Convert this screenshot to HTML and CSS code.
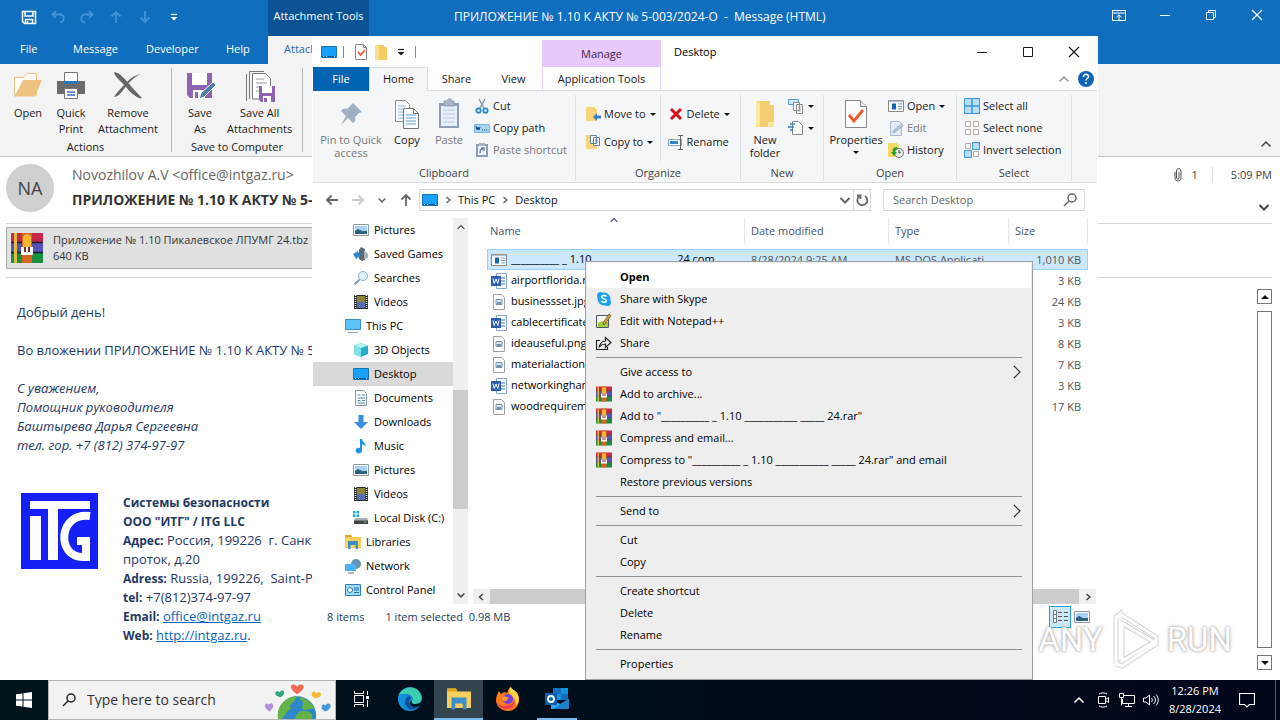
FILE: index.html
```html
<!DOCTYPE html>
<html lang="en">
<head>
    <meta charset="UTF-8">
    <meta name="viewport" content="width=device-width, initial-scale=1.0">
    <title>Desktop</title>
    <link rel="stylesheet" href="styles.css">
</head>
<body>

    <!-- Icon sprite -->
    <svg class="sprite" aria-hidden="true">
        <symbol id="save" viewBox="0 0 16 16"><path d="M1.5 2.5h13v12h-11l-2-2zM4 2.500v4.500h8v-4.500M4.500 14.500v-4h7v4M6.500 12v2" fill="none" stroke="currentColor" stroke-width="1.500"/></symbol>
        <symbol id="undo" viewBox="0 0 16 16"><path d="M6 2L2.500 5.500 6 9M2.500 5.500H10c5 0 5 7 0 8" fill="none" stroke="currentColor" stroke-width="1.800"/></symbol>
        <symbol id="redo" viewBox="0 0 16 16"><path d="M10 2l3.500 3.500L10 9M13.500 5.500H6c-5 0-5 7 0 8" fill="none" stroke="currentColor" stroke-width="1.800"/></symbol>
        <symbol id="up" viewBox="0 0 16 16"><path d="M8 14V3M3.500 7.500L8 3l4.500 4.500" fill="none" stroke="currentColor" stroke-width="1.800"/></symbol>
        <symbol id="down" viewBox="0 0 16 16"><path d="M8 2v11M3.500 8.500L8 13l4.500-4.500" fill="none" stroke="currentColor" stroke-width="1.800"/></symbol>
        <symbol id="left" viewBox="0 0 16 16"><path d="M14 8H3M7.500 3.500L3 8l4.500 4.500" fill="none" stroke="currentColor" stroke-width="1.800"/></symbol>
        <symbol id="right" viewBox="0 0 16 16"><path d="M2 8h11M8.500 3.500L13 8l-4.500 4.500" fill="none" stroke="currentColor" stroke-width="1.800"/></symbol>
        <symbol id="more" viewBox="0 0 16 16"><path d="M5 5.500h6" stroke="currentColor" stroke-width="1.200"/><path d="M4.500 8h7L8 11.500z" fill="currentColor"/></symbol>
        <symbol id="chev-up" viewBox="0 0 16 16"><path d="M3.500 10.500L8 6l4.500 4.500" fill="none" stroke="currentColor" stroke-width="1.500"/></symbol>
        <symbol id="chev-down" viewBox="0 0 16 16"><path d="M3.500 6L8 10.500 12.500 6" fill="none" stroke="currentColor" stroke-width="2"/></symbol>
        <symbol id="chev-left" viewBox="0 0 16 16"><path d="M10.500 4L6 8l4.500 4" fill="none" stroke="currentColor" stroke-width="2"/></symbol>
        <symbol id="chev-right" viewBox="0 0 16 16"><path d="M6 4l4.500 4L6 12" fill="none" stroke="currentColor" stroke-width="2"/></symbol>
        <symbol id="chev-thin" viewBox="0 0 16 16"><path d="M5 2l6 6-6 6" fill="none" stroke="#333" stroke-width="1.200"/></symbol>
        <symbol id="minimize" viewBox="0 0 16 16"><path d="M3 8.500h10" stroke="currentColor"/></symbol>
        <symbol id="maximize" viewBox="0 0 16 16"><path d="M3.500 3.500h9v9h-9z" fill="none" stroke="currentColor"/></symbol>
        <symbol id="restore" viewBox="0 0 16 16"><path d="M3.500 5.500h7v7h-7zM5.500 5V3.500h7v7H11" fill="none" stroke="currentColor"/></symbol>
        <symbol id="close" viewBox="0 0 16 16"><path d="M3 3l10 10M13 3L3 13" stroke="currentColor" stroke-width="1.200"/></symbol>
        <symbol id="ribbon-opts" viewBox="0 0 16 16"><path d="M1.500 3.500h13v10h-13zM1.500 6h13M8 13V8M5.500 10.200L8 7.800l2.500 2.400" fill="none" stroke="currentColor"/></symbol>
        <symbol id="clip" viewBox="0 0 16 16"><path d="M5 5v6c0 4 6 4 6 0V4c0-3.500-4.500-3.500-4.500 0v7c0 1.500 2.500 1.500 2.500 0V5" fill="none" stroke="#555"/></symbol>

        <symbol id="folder-open" viewBox="0 0 32 32"><path d="M2.500 25V7.500h9l3-4h10V25z" fill="#fff" stroke="#edc27e"/><path d="M2.500 26.500L11 10h19l-7 16.500z" fill="#edc180"/></symbol>
        <symbol id="printer" viewBox="0 0 32 32"><path d="M2 11h28v13H2z" fill="#6b6b6b"/><path d="M9.500 2.500h13v9h-13z" fill="#fff" stroke="#777"/><path d="M9 11h14v3H9z" fill="#2f74bd"/><path d="M9.500 18.500h13v10h-13z" fill="#fff" stroke="#777"/><path d="M12 22h8M12 25h8" stroke="#2f74bd" stroke-width="1.500"/></symbol>
        <symbol id="remove" viewBox="0 0 32 32"><path d="M3 3c4 0 10 7 14 12 4 5 9 10 12 13-8-3-11-7-14-11C11 12 4 7 3 3z" fill="#666" stroke="#666" stroke-width="1.500"/><path d="M29 4C20 8 16 14 12 19c-3 4-6 8-10 8 3-5 8-10 12-14 4-5 9-8 15-9z" fill="#666"/></symbol>
        <symbol id="save-as" viewBox="0 0 32 32"><path d="M3 3h25v25H6l-3-3z" fill="#8f63b4"/><path d="M8 3h15v12H8zM9 20h12v8H9z" fill="#fff"/><path d="M11 22h3v6h-3z" fill="#8f63b4"/><path d="M15 29l2-6L29 12l3 3-12 12z" fill="#4a7fb5" stroke="#fff"/></symbol>
        <symbol id="save-all" viewBox="0 0 32 32"><path d="M5.500 29V1.500H20M2.500 31V4" fill="none" stroke="#777"/><path d="M8.500 3.500h13l5 5V29h-18z" fill="#fff" stroke="#777"/><path d="M12 9h8M12 13h11M12 17h8M12 21h4" stroke="#999"/><path d="M15 16h16v16H17l-2-2z" fill="#8f63b4"/><path d="M18 16h10v7H18zM19 26h8v6h-8z" fill="#fff"/><path d="M20 28h3v4h-3z" fill="#8f63b4"/></symbol>

        <symbol id="monitor" viewBox="0 0 16 16"><path d="M.5 2.500h15v11H.5z" fill="#18a0fb" stroke="#1773b8"/><path d="M1 12.500h14" stroke="#0b5c9b"/><path d="M2 12.500h1M5 12.500h1M13 12.500h1" stroke="#9cd6fb"/></symbol>
        <symbol id="check-doc" viewBox="0 0 16 16"><path d="M2.500.5h8l3 3v12h-11z" fill="#fff" stroke="#888"/><path d="M10.500.5v3h3" fill="none" stroke="#888"/><path d="M5 8l2.500 3L12 6" fill="none" stroke="#ea5a2a" stroke-width="1.800"/></symbol>
        <symbol id="folder" viewBox="0 0 16 16"><path d="M2 1h9v2h3v13H2z" fill="#f3cd62"/><path d="M2 1h3l1 3v12H2z" fill="#fbe08c"/></symbol>
        <symbol id="pin" viewBox="0 0 32 32"><path d="M18 5l9 9-3 1-4 4c1 3 0 5-2 6l-5-5-7 7 5-9-5-5c1-2 4-3 6-2l4-4z" fill="#9fb0c4"/></symbol>
        <symbol id="copy" viewBox="0 0 32 32"><path d="M4.500 2.500h10l4 4v17h-14z" fill="#fff" stroke="#8a929b"/><path d="M7 8h8M7 11h9M7 14h9M7 17h9M7 20h6" stroke="#7db2e2"/><path d="M12.500 10.500h10l5 5v15h-15z" fill="#fff" stroke="#777"/><path d="M22.500 10.500v5h5" fill="none" stroke="#777"/><path d="M15 17h10M15 20h10M15 23h10M15 26h10" stroke="#5a9fdc"/></symbol>
        <symbol id="paste" viewBox="0 0 32 32"><path d="M6 5h20v25H6z" fill="#8d9db5"/><path d="M8 8h16v20H8z" fill="#e9eff8"/><path d="M11 3h3c1-3 4-3 5 0h2v5H11z" fill="#aab6c8" stroke="#8d9db5"/><path d="M10 12h12M10 16h12M10 20h12M10 24h12" stroke="#b7c7df"/></symbol>
        <symbol id="cut" viewBox="0 0 16 16"><path d="M5 1l5 9M11 1L6 10" stroke="#8c98a4" stroke-width="1.500"/><circle cx="4.500" cy="12.500" r="2.200" fill="none" stroke="#2589d0" stroke-width="1.800"/><circle cx="11.500" cy="12.500" r="2.200" fill="none" stroke="#2589d0" stroke-width="1.800"/></symbol>
        <symbol id="path" viewBox="0 0 16 16"><path d="M.5 4.500h15v8H.5z" fill="#a9d5f5" stroke="#79b5e4"/><path d="M2 6l1 4 1-3 1 3 1-3M8 10h1M10 10h1M12 10h1" fill="none" stroke="#174a77"/></symbol>
        <symbol id="shortcut" viewBox="0 0 16 16"><path d="M2 2h12v13H2z" fill="#8d9db5"/><path d="M4 4h8v9H4z" fill="#eef2f9"/><path d="M5 1h6v3H5z" fill="#aab6c8"/><path d="M6 11c0-3 1-4 3-4M7 6h3v3" fill="none" stroke="#71819b" stroke-width="1.500"/></symbol>
        <symbol id="move" viewBox="0 0 16 16"><path d="M1 1h9v2h2v12H1z" fill="#f6d678"/><path d="M8 11l4-4v2.500h4v3h-4V15z" fill="#3c7fc8"/></symbol>
        <symbol id="copy-to" viewBox="0 0 16 16"><path d="M1 1h9v2h2v12H1z" fill="#f6d678"/><path d="M5.500 1.500h6v8h-6zM8.500 3.500h6v8h-6z" fill="#fff" stroke="#6082a9"/><path d="M10 6h3M10 8h3" stroke="#5a9fdc"/></symbol>
        <symbol id="delete" viewBox="0 0 16 16"><path d="M3 3l10 10M13 3L3 13" stroke="#d8101c" stroke-width="3"/></symbol>
        <symbol id="rename" viewBox="0 0 16 16"><path d="M.5 5.500h13v6H.5z" fill="#fff" stroke="#88a8c8"/><path d="M2 7h8v3H2z" fill="#3083cf"/><path d="M10 1.500h5M10 15.500h5M12.500 1.500v14" stroke="#666"/></symbol>
        <symbol id="big-folder" viewBox="0 0 32 32"><path d="M7 3h14v4h4v22H7z" fill="#f4cf72"/><path d="M7 3l4 2v25l-4-3z" fill="#fde7a5"/><path d="M19 24h6v5h-6z" fill="#fbe5a0"/></symbol>
        <symbol id="new-item" viewBox="0 0 16 16"><path d="M.5 1.500h10v5H.5z" fill="#cfe8f8" stroke="#5e9bc7"/><path d="M5.500 4.500h6v8h-6zM8.500 6.500h6v9h-6z" fill="#fff" stroke="#888"/><path d="M10 9h3M10 11h3M10 13h3" stroke="#aaa"/></symbol>
        <symbol id="easy" viewBox="0 0 16 16"><path d="M4.500 1.500h6l4 4v9h-10z" fill="#fff" stroke="#888"/><path d="M2 4h5M0 7h6M2 10h3" stroke="#2f7fc7" stroke-width="1.500"/></symbol>
        <symbol id="props" viewBox="0 0 32 32"><path d="M5.500 2.500h15l6 6v21h-21z" fill="#fff" stroke="#888"/><path d="M20.500 2.500v6h6" fill="#e5e9ee" stroke="#888"/><path d="M9 17l5 6 9-11" fill="none" stroke="#ea5a2a" stroke-width="3"/></symbol>
        <symbol id="app" viewBox="0 0 16 16"><path d="M.5 2.500h15v11H.5z" fill="#fff" stroke="#8a8a8a"/><path d="M1 3.500h14" stroke="#b9c3cd" stroke-width="1.500"/><path d="M4 5.500h4v6H4z" fill="#1565b5"/><path d="M10 6h4M10 8.500h4M10 11h4" stroke="#6ea3d0"/></symbol>
        <symbol id="edit" viewBox="0 0 16 16"><path d="M2.500 1.500h9l2 2v12h-11z" fill="#e2ebf6" stroke="#a9b9cf"/><path d="M5 13l1-3 8-6 1 2-8 6z" fill="#b9c9dd" stroke="#9baec8"/></symbol>
        <symbol id="history" viewBox="0 0 16 16"><path d="M0 1h9v2h2v12H0z" fill="#f6d95e"/><circle cx="11" cy="11" r="4.500" fill="#e8e8e8" stroke="#777"/><path d="M11 8v3l2-1" fill="none" stroke="#555"/><path d="M9 5C5 5 4 8 5 10H3l3 4 3-4H7c0-2 1-3 3-3z" fill="#28a12f"/></symbol>
        <symbol id="sel-all" viewBox="0 0 16 16"><path d="M.5.5h15v15H.5z" fill="#b8e0fb" stroke="#3e95d6"/><path d="M8 0v16M0 8h16" stroke="#3e95d6" stroke-width="1.500"/></symbol>
        <symbol id="sel-none" viewBox="0 0 16 16"><path d="M1.500 1.500h5v5h-5zM9.500 1.500h5v5h-5zM1.500 9.500h5v5h-5zM9.500 9.500h5v5h-5z" fill="#fff" stroke="#b9a8a0"/></symbol>
        <symbol id="sel-inv" viewBox="0 0 16 16"><path d="M1.500 1.500h5v5h-5zM9.500 9.500h5v5h-5z" fill="#fff" stroke="#b9a8a0"/><path d="M8.500.5h7v7h-7zM.5 8.500h7v7h-7z" fill="#b8e0fb" stroke="#3e95d6"/></symbol>
        <symbol id="help" viewBox="0 0 16 16"><circle cx="8" cy="8" r="8" fill="#0c63b8"/><path d="M5.500 6c0-3.500 5-3.500 5-.500C10.500 7.500 8 7.500 8 9.500" fill="none" stroke="#fff" stroke-width="1.600"/><circle cx="8" cy="12" r="1" fill="#fff"/></symbol>
        <symbol id="refresh" viewBox="0 0 16 16"><path d="M5 4.500A5 5 0 1 0 11 4M3 3.500h3.500V7" fill="none" stroke="currentColor" stroke-width="1.800"/></symbol>
        <symbol id="search" viewBox="0 0 16 16"><circle cx="10" cy="6" r="4" fill="none" stroke="currentColor" stroke-width="1.500"/><path d="M7 9l-5 5" stroke="currentColor" stroke-width="1.500"/></symbol>

        <symbol id="pictures" viewBox="0 0 16 16"><path d="M.5 2.500h15v11H.5z" fill="#fff" stroke="#8e98a4"/><path d="M2 4h12v8H2z" fill="#a8d3f5"/><path d="M2 9l3-2 4 2h5v3H2z" fill="#2d6180"/></symbol>
        <symbol id="games" viewBox="0 0 16 16"><path d="M8 1l4 2v11l-3 1-3-2V4z" fill="#596b78"/><path d="M11 4l4 4v4l-4 1z" fill="#a5b0b8"/><path d="M0 8l5-3 2 5-4 3z" fill="#2e8bd0"/></symbol>
        <symbol id="searches" viewBox="0 0 16 16"><circle cx="10" cy="6" r="4.500" fill="#dff0fc" stroke="#8fb2cf"/><path d="M6.500 9.500L1.500 14.500" stroke="#7d96ad" stroke-width="1.800"/></symbol>
        <symbol id="videos" viewBox="0 0 16 16"><path d="M1 1h14v14H1z" fill="#2b2b33"/><path d="M4 2h8v6H4z" fill="#8d8438"/><path d="M4 8h8v6H4z" fill="#5570b0"/><path d="M2.500 1v14M13.500 1v14" stroke="#fff" stroke-width="1.500" stroke-dasharray="1 1"/></symbol>
        <symbol id="pc" viewBox="0 0 16 16"><path d="M.5 1.500h15v10H.5z" fill="#5cc3fa" stroke="#3a8cc4"/><path d="M3 14.500h10" stroke="#8ba3b5"/></symbol>
        <symbol id="cube" viewBox="0 0 16 16"><path d="M8 1l7 2.500V12l-7 3-7-3V3.500z" fill="#20b0c9"/><path d="M1 3.500L8 6v9l-7-3z" fill="#7fe0ea"/><path d="M1 3.500L8 1l7 2.500L8 6z" fill="#b6f1f5"/></symbol>
        <symbol id="documents" viewBox="0 0 16 16"><path d="M2.500.5h8l3 3v12h-11z" fill="#fff" stroke="#8a97a5"/><path d="M4.500 5h3M9 5h3M4.500 8H12M4.500 10.500h3M9 10.500h3M4.500 13H12" stroke="#3e8cc7"/></symbol>
        <symbol id="downloads" viewBox="0 0 16 16"><path d="M5.500 1h5v7H15l-7 7-7-7h4.500z" fill="#3b8ede"/></symbol>
        <symbol id="music" viewBox="0 0 16 16"><path d="M7 1h2c0 3 4 3 3.500 8-1-2-2-2.500-3.500-3v6.500A3.200 2.800 0 1 1 7 10z" fill="#1b95ea"/></symbol>
        <symbol id="disk" viewBox="0 0 16 16"><path d="M0 1h2.500v2.500H0zM3.500 1H6v2.500H3.500zM0 4.500h2.500V7H0zM3.500 4.500H6V7H3.500z" fill="#18a7e8"/><path d="M2 8h12l1 2v4H1v-4z" fill="#aab0b5"/><path d="M1 10.500h14V14H1z" fill="#444"/><path d="M11 12h2" stroke="#57e36a"/></symbol>
        <symbol id="libraries" viewBox="0 0 16 16"><path d="M0 1h6l1 2h9v11H0z" fill="#f7cf5e"/><path d="M0 1h6l1 2H0z" fill="#e59f21"/><path d="M3 7h10v8h-2.500v-4h-5v4H3z" fill="#3f8fc9"/></symbol>
        <symbol id="network" viewBox="0 0 16 16"><circle cx="11" cy="6" r="5" fill="#6793b4"/><path d="M0 6h11v7H0z" fill="#4ab4f2"/><path d="M3 15h6" stroke="#59758a"/></symbol>
        <symbol id="control" viewBox="0 0 16 16"><path d="M.5 2.500h15v11H.5z" fill="#9fdcfb" stroke="#2c7fb8"/><circle cx="5" cy="8" r="2.500" fill="#fff" stroke="#2b79ad"/><path d="M9 6h5M9 8h5M9 10.500h5" stroke="#2468a0"/></symbol>
        <symbol id="word" viewBox="0 0 16 16"><path d="M5.500.5h10v15h-10z" fill="#fff" stroke="#85a5cf"/><path d="M10 5h4M10 8h4M10 11h4" stroke="#3c6fb5"/><path d="M0 3h10v10H0z" fill="#2b5fae"/><path d="M2 5.500l1.200 5L5 6l1.800 4.500L8 5.500" fill="none" stroke="#fff"/></symbol>
        <symbol id="image" viewBox="0 0 16 16"><path d="M2.500.5h8l3 3v12h-11z" fill="#fff" stroke="#a0a0a0"/><path d="M5 5.500h6v5H5z" fill="#d4e8f6" stroke="#7c93a6"/><path d="M6 9h4" stroke="#3f79a5" stroke-width="1.500"/></symbol>

        <symbol id="rar" viewBox="0 0 32 32"><path d="M0 1h32v9H0z" fill="#c4284a"/><path d="M0 11h32v9H0z" fill="#5453b8"/><path d="M0 21h32v10H0z" fill="#168f40"/><path d="M0 10.500h32M0 20.500h32" stroke="#1d1d2b" stroke-width="1.500"/><path d="M3 1h3v30H3z" fill="#e3b93c"/><path d="M11 1h10v30H11z" fill="#d9661e"/><path d="M12 6c0-5 8-5 8 0v9h-8z" fill="#f6b52e"/><path d="M10 15h12v8H10z" fill="#fff"/><path d="M13 15h2v5h-2zM17 15h2v5h-2z" fill="#7a3320"/></symbol>
        <symbol id="skype" viewBox="0 0 16 16"><circle cx="8" cy="8" r="6.500" fill="#1fa2ec"/><circle cx="4.500" cy="4.500" r="3.500" fill="#1fa2ec"/><circle cx="11.500" cy="11.500" r="3.500" fill="#1fa2ec"/><path d="M10.500 5.500C9 3.800 5.600 4.300 5.800 6.300 6 8.300 10.300 7.500 10.300 9.700c0 2-3.500 2.200-4.800.3" fill="none" stroke="#fff" stroke-width="1.500"/></symbol>
        <symbol id="notepad" viewBox="0 0 16 16"><path d="M.5 2.500h12v12H.5z" fill="#f6f8f0" stroke="#556"/><path d="M2 10l4-2 6 1v5H2z" fill="#9ccf3a"/><path d="M7 10l6-9 2 1.500L9 11l-2 .5z" fill="#dd9d3b" stroke="#6c4b20" stroke-width=".7"/><path d="M1 2.500h10" stroke="#555" stroke-dasharray="1 1"/></symbol>
        <symbol id="share" viewBox="0 0 16 16"><path d="M4 5.500H.5v9h11V12M3.500 11.500c1-4 3-5.500 6-5.500V2.500l5.500 5-5.500 5V9c-3 0-4 .5-6 2.500z" fill="none" stroke="#222" stroke-width="1.200"/></symbol>
        <symbol id="details" viewBox="0 0 16 16"><path d="M1.500 1.500h3v4h-3zM1.500 5.500h3v4h-3zM1.500 9.500h3v4h-3z" fill="#fff" stroke="#777"/><path d="M6 3.500h4M12 3.500h4M6 7.500h4M12 7.500h4M6 11.500h4M12 11.500h4" stroke="#555"/></symbol>

        <symbol id="windows" viewBox="0 0 16 16"><path d="M0 2.300l6.500-.9v6.100H0zM7.500 1.200L16 0v7.500H7.500zM0 8.500h6.500v6.100L0 13.700zM7.500 8.500H16V16l-8.500-1.200z" fill="#fff"/></symbol>
        <symbol id="taskview" viewBox="0 0 16 16"><path d="M1.500 4.500h9v7h-9zM1.500 0v2.500h9V0M1.500 16v-2.500h9V16M14.500 0v4M14.500 9v7" fill="none" stroke="#fff"/><path d="M13 5h3v3h-3z" fill="#fff"/></symbol>
        <symbol id="edge" viewBox="0 0 24 24"><circle cx="12" cy="12" r="12" fill="#1583d3"/><path d="M1 8C4-1 19-3 23 8c2 6-2 9-6 9-3 0-4-1-3-3 2-3-1-7-5-7-4 0-7 1-8 4z" fill="#3bcdb0"/><path d="M1 8c-2 5 0 13 8 15.500C4 20 4 13 10 9 6 6 2 7 1 8z" fill="#1391df"/><path d="M10 9c-5 5-3 11 2 13 4 1 8-1 10-4-5 2-10 1-11-3 0-2 1-3 2-4-1-1-2-2-3-2z" fill="#0a4f99"/><path d="M14 13c-1 3 0 4 3 4 3 0 6-1 7-4v4l-2 2c-5 2-11 0-10-4z" fill="#001720"/></symbol>
        <symbol id="firefox" viewBox="0 0 24 24"><path d="M15 0c1 3 4 3 6 6 4 6 2 14-4 17C10 26 1 22 0 14c0-4 1-7 3-10l2 3c2-2 4-2 6-1 1-3 2-5 4-6z" fill="#ff7a1c"/><path d="M15 0c1 3 4 3 6 6 3 5 2 10-1 12-1-5-2-9-7-11 0-3 1-6 2-7z" fill="#ffd43e"/><path d="M0 14c2 3 4 5 8 5 6 0 11-3 10-8 2 5-1 11-8 11-5 0-9-4-10-8z" fill="#f23a57"/><circle cx="12" cy="12" r="5" fill="#7542d9"/><path d="M6 11c2-3 5-1 7 0-3 1-1 3-4 3-2 0-3-1-3-3z" fill="#ff9a2b"/></symbol>
        <symbol id="outlook" viewBox="0 0 24 24"><path d="M8 1h15v12H8z" fill="#1590df"/><path d="M8 1h8v6H8zM16 7h7v6h-7z" fill="#0f6fbc"/><path d="M6 12l9 5 9-5v10H6z" fill="#2fa8ef"/><path d="M24 12v10H8z" fill="#1b7fd0"/><path d="M0 6h12v12H0z" fill="#0b5cab"/><circle cx="6" cy="12" r="3" fill="none" stroke="#fff" stroke-width="1.800"/></symbol>
        <symbol id="earth" viewBox="0 0 72 40"><circle cx="34" cy="36" r="20" fill="#2f86c9"/><path d="M17 25c5-7 12-9 17-9-3 4-2 5-6 8s2 4-2 6-3 5-5 6-4 8-7 5c-1-6 0-12 3-16zM37 17c7 1 12 6 15 11-3 3-3 0-7 2s-7-1-5-5-4-5-3-8zM37 32c6-1 12 0 13 4s-4 7-5 10H33c-3-5 0-12 4-14z" fill="#63b345"/><path d="M34 14c-7-5-8-9-5-10 3-1 5 2 5 2s2-3 5-2c4 1 2 6-5 10z" fill="#ef6a57"/><path d="M17 17c-6-1-7-4-5-6 2-1 4 1 4 1s1-3 3-2c3 1 1 5-2 7z" fill="#35a77c"/><path d="M5 32c-5-3-6-6-4-8 2-1 3 1 3 1s2-3 4-1c2 2 1 5-3 8z" fill="#b48fdd"/><path d="M53 18c-5-2-4-6-2-7 2 0 3 2 3 2s2-2 4-1c3 2 0 6-5 6z" fill="#f6b92f"/><path d="M64 32c-5-2-5-5-3-7 1-1 3 1 3 1s1-3 4-2c3 2 1 6-4 8z" fill="#4597dd"/></symbol>
        <symbol id="meet" viewBox="0 0 16 16"><path d="M3.500 4.500h7v7h-7zM10.500 7.500l3-2v5l-3-2M4 2c2-1.500 6-1.500 8 0M4 14c2 1.500 6 1.500 8 0" fill="none" stroke="#fff"/></symbol>
        <symbol id="ethernet" viewBox="0 0 16 16"><path d="M5 3.500h10.500v8H3.500V7M9.500 12v2.500M6 14.500h7M.5 1.500h4v4h-4zM2.500 5.500v8" fill="none" stroke="#fff"/></symbol>
        <symbol id="sound" viewBox="0 0 16 16"><path d="M.5 6v4h2.500l3.500 3V3L3 6zM8.500 6c1 1 1 3 0 4M10.500 4c2.500 2 2.500 6 0 8M13 2.500c3 3 3 8 0 11" fill="none" stroke="#fff"/></symbol>
        <symbol id="notify" viewBox="0 0 16 16"><path d="M.5 1.500h15v11h-5L8 15l-2.500-2.500h-5z" fill="none" stroke="#fff" stroke-width="1.200"/></symbol>
    </svg>

    <div class="desktop">

        <!-- Outlook message -->
        <main class="outlook">
            <header class="mail-title">
                <div class="qat">
                    <svg class="icon"><use href="#save"/></svg>
                    <svg class="icon faded"><use href="#undo"/></svg>
                    <svg class="icon faded"><use href="#redo"/></svg>
                    <svg class="icon faded"><use href="#up"/></svg>
                    <svg class="icon faded"><use href="#down"/></svg>
                    <svg class="icon"><use href="#more"/></svg>
                </div>
                <span class="tools-tab">Attachment Tools</span>
                <span class="mail-caption">ПРИЛОЖЕНИЕ № 1.10 К АКТУ № 5-003/2024-О&nbsp; -&nbsp; Message (HTML)</span>
                <div class="win-buttons">
                    <button aria-label="Ribbon options"><svg class="icon"><use href="#ribbon-opts"/></svg></button>
                    <button aria-label="Minimize"><svg class="icon"><use href="#minimize"/></svg></button>
                    <button aria-label="Restore"><svg class="icon"><use href="#restore"/></svg></button>
                    <button aria-label="Close"><svg class="icon"><use href="#close"/></svg></button>
                </div>
            </header>

            <nav class="mail-tabs">
                <button>File</button>
                <button>Message</button>
                <button>Developer</button>
                <button>Help</button>
                <button class="active">Attachments</button>
            </nav>

            <div class="mail-ribbon">
                <section class="mail-group actions">
                    <div class="mail-tools">
                        <button><svg class="icon-lg"><use href="#folder-open"/></svg>Open</button>
                        <button><svg class="icon-lg"><use href="#printer"/></svg>Quick<br>Print</button>
                        <button><svg class="icon-lg"><use href="#remove"/></svg>Remove<br>Attachment</button>
                    </div>
                    <span>Actions</span>
                </section>
                <section class="mail-group saving">
                    <div class="mail-tools">
                        <button><svg class="icon-lg"><use href="#save-as"/></svg>Save<br>As</button>
                        <button><svg class="icon-lg"><use href="#save-all"/></svg>Save All<br>Attachments</button>
                    </div>
                    <span>Save to Computer</span>
                </section>
                <svg class="icon collapse"><use href="#chev-up"/></svg>
            </div>

            <div class="mail-head">
                <div class="avatar">NA</div>
                <div class="mail-from">
                    <p>Novozhilov A.V &lt;office@intgaz.ru&gt;</p>
                    <h1>ПРИЛОЖЕНИЕ № 1.10 К АКТУ № 5-003/2024-О</h1>
                </div>
                <div class="mail-meta">
                    <div><svg class="icon"><use href="#clip"/></svg><span>1</span><time>5:09 PM</time></div>
                    <svg class="icon"><use href="#chev-down"/></svg>
                </div>
            </div>

            <div class="attachments">
                <div class="attachment">
                    <svg class="icon-lg"><use href="#rar"/></svg>
                    <p>Приложение № 1.10 Пикалевское ЛПУМГ 24.tbz<br>640 KB</p>
                </div>
            </div>

            <div class="mail-body">
                <article>
                    <p>Добрый день!</p>
                    <p>Во вложении ПРИЛОЖЕНИЕ № 1.10 К АКТУ № 5-003</p>
                    <p class="regards">С уважением,<br>Помощник руководителя<br>Баштырева Дарья Сергеевна<br>тел. гор. +7 (812) 374-97-97</p>
                    <div class="signature">
                        <svg class="logo" viewBox="0 0 77 76"><path fill="#1420f5" d="M0 0h77v76H0z"/><path fill="#fff" d="M9 8h60v8H37v51H27V16H9zM9 23h11v44H9z"/><path d="M69 23c-32-4-34 41-7 41h3V48h-9" fill="none" stroke="#fff" stroke-width="8"/></svg>
                        <p>
                            <b>Системы безопасности<br>ООО "ИТГ" / ITG LLC</b><br>
                            <b>Адрес:</b> Россия, 199226&nbsp; г. Санкт<br>
                            проток, д.20<br>
                            <b>Adress:</b> Russia, 199226,&nbsp; Saint-P<br>
                            <b>tel:</b> +7(812)374-97-97<br>
                            <b>Email:</b> <a href="mailto:office@intgaz.ru">office@intgaz.ru</a><br>
                            <b>Web:</b> <a href="http://intgaz.ru">http://intgaz.ru</a>.
                        </p>
                    </div>
                </article>
                <div class="mail-scroll">
                    <i class="arrow-up"></i>
                    <div></div>
                    <i class="arrow-down"></i>
                </div>
            </div>
        </main>

        <!-- Taskbar -->
        <footer class="taskbar">
            <button class="start" aria-label="Start"><svg class="icon"><use href="#windows"/></svg></button>
            <label class="task-search">
                <svg class="icon"><use href="#search"/></svg>
                <input type="text" placeholder="Type here to search" aria-label="Type here to search">
                <svg class="earth"><use href="#earth"/></svg>
            </label>
            <button class="task" aria-label="Task view"><svg class="icon"><use href="#taskview"/></svg></button>
            <button class="task" aria-label="Edge"><svg class="icon-md"><use href="#edge"/></svg></button>
            <button class="task current" aria-label="File Explorer"><svg class="icon-md"><use href="#libraries"/></svg></button>
            <button class="task" aria-label="Firefox"><svg class="icon-md"><use href="#firefox"/></svg></button>
            <button class="task running" aria-label="Outlook"><svg class="icon-md"><use href="#outlook"/></svg></button>
            <div class="tray">
                <svg class="icon"><use href="#chev-up"/></svg>
                <svg class="icon"><use href="#meet"/></svg>
                <svg class="icon"><use href="#ethernet"/></svg>
                <svg class="icon"><use href="#sound"/></svg>
                <time>12:26 PM<br>8/28/2024</time>
                <svg class="icon"><use href="#notify"/></svg>
            </div>
        </footer>

        <!-- File Explorer -->
        <div class="explorer">
            <header class="ex-title">
                <div class="ex-qat">
                    <svg class="icon"><use href="#monitor"/></svg>
                    <i></i>
                    <svg class="icon"><use href="#check-doc"/></svg>
                    <svg class="icon"><use href="#folder"/></svg>
                    <svg class="icon"><use href="#more"/></svg>
                    <i></i>
                </div>
                <span class="manage">Manage</span>
                <span class="ex-caption">Desktop</span>
                <div class="win-buttons">
                    <button aria-label="Minimize"><svg class="icon"><use href="#minimize"/></svg></button>
                    <button aria-label="Maximize"><svg class="icon"><use href="#maximize"/></svg></button>
                    <button aria-label="Close"><svg class="icon"><use href="#close"/></svg></button>
                </div>
            </header>

            <nav class="ex-tabs">
                <button class="file">File</button>
                <button class="active">Home</button>
                <button>Share</button>
                <button>View</button>
                <button class="app-tools">Application Tools</button>
                <svg class="icon hint"><use href="#chev-up"/></svg>
                <svg class="icon"><use href="#help"/></svg>
            </nav>

            <div class="ex-ribbon">
                <section class="ex-group clipboard">
                    <div class="tools">
                        <button class="big off wide"><svg class="icon-lg"><use href="#pin"/></svg>Pin to Quick<br>access</button>
                        <button class="big"><svg class="icon-lg"><use href="#copy"/></svg>Copy</button>
                        <button class="big off"><svg class="icon-lg"><use href="#paste"/></svg>Paste</button>
                        <div class="stack">
                            <button><svg class="icon"><use href="#cut"/></svg>Cut</button>
                            <button><svg class="icon"><use href="#path"/></svg>Copy path</button>
                            <button class="off"><svg class="icon"><use href="#shortcut"/></svg>Paste shortcut</button>
                        </div>
                    </div>
                    <span>Clipboard</span>
                </section>
                <section class="ex-group organize">
                    <div class="tools">
                        <div class="stack loose">
                            <button><svg class="icon"><use href="#move"/></svg>Move to<i class="caret"></i></button>
                            <button><svg class="icon"><use href="#copy-to"/></svg>Copy to<i class="caret"></i></button>
                        </div>
                        <div class="stack loose ruled">
                            <button><svg class="icon"><use href="#delete"/></svg>Delete<i class="caret"></i></button>
                            <button><svg class="icon"><use href="#rename"/></svg>Rename</button>
                        </div>
                    </div>
                    <span>Organize</span>
                </section>
                <section class="ex-group new">
                    <div class="tools">
                        <button class="big"><svg class="icon-lg"><use href="#big-folder"/></svg>New<br>folder</button>
                        <div class="stack">
                            <button aria-label="New item"><svg class="icon"><use href="#new-item"/></svg><i class="caret"></i></button>
                            <button aria-label="Easy access"><svg class="icon"><use href="#easy"/></svg><i class="caret"></i></button>
                        </div>
                    </div>
                    <span>New</span>
                </section>
                <section class="ex-group open">
                    <div class="tools">
                        <button class="big"><svg class="icon-lg"><use href="#props"/></svg>Properties<i class="caret"></i></button>
                        <div class="stack">
                            <button><svg class="icon"><use href="#app"/></svg>Open<i class="caret"></i></button>
                            <button class="off"><svg class="icon"><use href="#edit"/></svg>Edit</button>
                            <button><svg class="icon"><use href="#history"/></svg>History</button>
                        </div>
                    </div>
                    <span>Open</span>
                </section>
                <section class="ex-group select">
                    <div class="tools">
                        <div class="stack">
                            <button><svg class="icon"><use href="#sel-all"/></svg>Select all</button>
                            <button><svg class="icon"><use href="#sel-none"/></svg>Select none</button>
                            <button><svg class="icon"><use href="#sel-inv"/></svg>Invert selection</button>
                        </div>
                    </div>
                    <span>Select</span>
                </section>
            </div>

            <div class="ex-nav">
                <svg class="icon"><use href="#left"/></svg>
                <svg class="icon disabled"><use href="#right"/></svg>
                <svg class="icon-sm"><use href="#chev-down"/></svg>
                <svg class="icon"><use href="#up"/></svg>
                <div class="address">
                    <svg class="icon"><use href="#monitor"/></svg>
                    <svg class="icon-sm"><use href="#chev-right"/></svg>
                    <span>This PC</span>
                    <svg class="icon-sm"><use href="#chev-right"/></svg>
                    <span>Desktop</span>
                    <svg class="icon push"><use href="#chev-down"/></svg>
                    <svg class="icon refresh"><use href="#refresh"/></svg>
                </div>
                <label class="ex-search">
                    <input type="text" placeholder="Search Desktop" aria-label="Search Desktop">
                    <svg class="icon"><use href="#search"/></svg>
                </label>
            </div>

            <div class="ex-main">
                <ul class="tree">
                    <li class="sub"><svg class="icon"><use href="#pictures"/></svg>Pictures</li>
                    <li class="sub"><svg class="icon"><use href="#games"/></svg>Saved Games</li>
                    <li class="sub"><svg class="icon"><use href="#searches"/></svg>Searches</li>
                    <li class="sub"><svg class="icon"><use href="#videos"/></svg>Videos</li>
                    <li><svg class="icon"><use href="#pc"/></svg>This PC</li>
                    <li class="sub"><svg class="icon"><use href="#cube"/></svg>3D Objects</li>
                    <li class="sub picked"><svg class="icon"><use href="#monitor"/></svg>Desktop</li>
                    <li class="sub"><svg class="icon"><use href="#documents"/></svg>Documents</li>
                    <li class="sub"><svg class="icon"><use href="#downloads"/></svg>Downloads</li>
                    <li class="sub"><svg class="icon"><use href="#music"/></svg>Music</li>
                    <li class="sub"><svg class="icon"><use href="#pictures"/></svg>Pictures</li>
                    <li class="sub"><svg class="icon"><use href="#videos"/></svg>Videos</li>
                    <li class="sub"><svg class="icon"><use href="#disk"/></svg>Local Disk (C:)</li>
                    <li><svg class="icon"><use href="#libraries"/></svg>Libraries</li>
                    <li><svg class="icon"><use href="#network"/></svg>Network</li>
                    <li><svg class="icon"><use href="#control"/></svg>Control Panel</li>
                </ul>
                <div class="vscroll">
                    <svg class="icon-sm"><use href="#chev-up"/></svg>
                    <div></div>
                    <svg class="icon-sm"><use href="#chev-down"/></svg>
                </div>
                <div class="files">
                    <table>
                        <thead>
                            <tr>
                                <th class="col-name">Name<svg class="icon-sm sort"><use href="#chev-up"/></svg></th>
                                <th class="col-date">Date modified</th>
                                <th class="col-type">Type</th>
                                <th>Size</th>
                            </tr>
                        </thead>
                        <tbody>
                            <tr class="selected"><td><svg class="icon"><use href="#app"/></svg>__________ _ 1.10 ___________ _____ 24.com</td><td>8/28/2024 9:25 AM</td><td>MS-DOS Applicati...</td><td>1,010 KB</td></tr>
                            <tr><td><svg class="icon"><use href="#word"/></svg>airportflorida.rtf</td><td></td><td></td><td>3 KB</td></tr>
                            <tr><td><svg class="icon"><use href="#image"/></svg>businessset.jpg</td><td></td><td></td><td>24 KB</td></tr>
                            <tr><td><svg class="icon"><use href="#word"/></svg>cablecertificate.rtf</td><td></td><td></td><td>3 KB</td></tr>
                            <tr><td><svg class="icon"><use href="#image"/></svg>ideauseful.png</td><td></td><td></td><td>8 KB</td></tr>
                            <tr><td><svg class="icon"><use href="#image"/></svg>materialaction.png</td><td></td><td></td><td>7 KB</td></tr>
                            <tr><td><svg class="icon"><use href="#word"/></svg>networkinghand.rtf</td><td></td><td></td><td>3 KB</td></tr>
                            <tr><td><svg class="icon"><use href="#image"/></svg>woodrequirement.png</td><td></td><td></td><td>17 KB</td></tr>
                        </tbody>
                    </table>
                    <div class="hscroll">
                        <svg class="icon-sm"><use href="#chev-left"/></svg>
                        <div></div>
                        <svg class="icon-sm"><use href="#chev-right"/></svg>
                    </div>
                </div>
            </div>

            <footer class="ex-status">
                <span>8 items</span>
                <span>1 item selected&nbsp; 0.98 MB</span>
                <button class="view-on" aria-label="Details"><svg class="icon"><use href="#details"/></svg></button>
                <button aria-label="Large icons"><svg class="icon"><use href="#pictures"/></svg></button>
            </footer>
        </div>

        <!-- Watermark -->
        <div class="watermark">
            <span>ANY</span>
            <svg viewBox="0 0 60 64"><path d="M11 56V9l4-3v45M15 6l36 23v7L17 58l-6-2M17 15l32 19-32 19z" fill="none" stroke="#d2d2d2" stroke-width="5"/><path d="M11 56V9l4-3v45M15 6l36 23v7L17 58l-6-2M17 15l32 19-32 19z" fill="none" stroke="#fff" stroke-width="3"/></svg>
            <span>RUN</span>
        </div>

        <!-- Context menu -->
        <ul class="menu">
            <li class="hover"><b>Open</b></li>
            <li><svg class="icon"><use href="#skype"/></svg>Share with Skype</li>
            <li><svg class="icon"><use href="#notepad"/></svg>Edit with Notepad++</li>
            <li><svg class="icon"><use href="#share"/></svg>Share</li>
            <li class="sep"></li>
            <li class="parent">Give access to<svg class="icon"><use href="#chev-thin"/></svg></li>
            <li><svg class="icon"><use href="#rar"/></svg>Add to archive...</li>
            <li><svg class="icon"><use href="#rar"/></svg>Add to "__________ _ 1.10 ___________ _____ 24.rar"</li>
            <li><svg class="icon"><use href="#rar"/></svg>Compress and email...</li>
            <li><svg class="icon"><use href="#rar"/></svg>Compress to "__________ _ 1.10 ___________ _____ 24.rar" and email</li>
            <li>Restore previous versions</li>
            <li class="sep"></li>
            <li class="parent">Send to<svg class="icon"><use href="#chev-thin"/></svg></li>
            <li class="sep"></li>
            <li>Cut</li>
            <li>Copy</li>
            <li class="sep"></li>
            <li>Create shortcut</li>
            <li>Delete</li>
            <li>Rename</li>
            <li class="sep"></li>
            <li>Properties</li>
        </ul>
    </div>

</body>
</html>
```
FILE: styles.css
```css
/* General Styles */
* {
    box-sizing: border-box;
}

body {
    margin: 0;
    font-family: "Open Sans", "Noto Sans", sans-serif;
    font-size: 11px;
    line-height: 16px;
    color: #1a1a1a;
}

p, h1, ul {
    margin: 0;
    padding: 0;
}

ul {
    list-style: none;
}

button {
    padding: 0;
    border: none;
    background: none;
    font: inherit;
    color: inherit;
}

input {
    min-width: 0;
    flex: 1;
    padding: 0;
    border: none;
    outline: none;
    background: none;
    font: inherit;
}

.sprite {
    display: none;
}

.icon, .icon-sm, .icon-md, .icon-lg {
    flex: none;
    width: 16px;
    height: 16px;
}

.icon-sm {
    width: 12px;
    height: 12px;
}

.icon-md {
    width: 24px;
    height: 24px;
}

.icon-lg {
    width: 32px;
    height: 32px;
}

.desktop {
    position: relative;
    display: flex;
    flex-direction: column;
    min-height: 100vh;
    overflow: hidden;
}

.win-buttons {
    display: flex;
    align-items: center;
}

.win-buttons button {
    display: grid;
    place-items: center;
    width: 46px;
    height: 30px;
}

/* Outlook */
.outlook {
    flex: 1;
    display: flex;
    flex-direction: column;
    background: #fff;
    white-space: nowrap;
}

.mail-title {
    display: flex;
    height: 36px;
    background: #106ebe;
    color: #fff;
}

.mail-title .win-buttons {
    height: 30px;
}

.qat {
    display: flex;
    gap: 13px;
    width: 268px;
    padding: 9px 0 0 21px;
}

.faded {
    color: #4492d6;
}

.tools-tab {
    width: 101px;
    padding-top: 8px;
    background: #0b5394;
    text-align: center;
}

.mail-caption {
    flex: 1;
    padding: 9px 0 0 85px;
    font-size: 12px;
}

.mail-tabs {
    display: grid;
    grid-template-columns: 53px 73px 80px 62px 101px;
    height: 28px;
    background: #106ebe;
    color: #fff;
}

.mail-tabs button {
    padding: 0 0 2px 20px;
    text-align: left;
}

.mail-tabs .active {
    padding-left: 16px;
    background: #f3f3f3;
    color: #2b6cb0;
}

.mail-ribbon {
    display: flex;
    height: 93px;
    padding: 4px 6px 4px 0;
    border-bottom: 1px solid #c8c8c8;
    background: #f3f3f3;
}

.mail-group {
    display: flex;
    flex-direction: column;
    border-right: 1px solid #b8b8b8;
    text-align: center;
}

.actions {
    width: 172px;
}

.saving {
    width: 131px;
}

.mail-tools {
    flex: 1;
    display: flex;
    align-items: flex-start;
    gap: 3px;
    padding-left: 8px;
}

.mail-tools button {
    display: block;
    padding: 0 4px;
}

.mail-tools svg {
    display: block;
    margin: 2px auto 3px;
}

.mail-group > span {
    height: 13px;
}

.collapse {
    margin: auto 0 0 auto;
    color: #444;
}

.mail-head {
    display: flex;
    gap: 18px;
    height: 67px;
    margin: 0 8px 0 6px;
    padding-top: 7px;
    border-bottom: 1px solid #d5d5d5;
}

.avatar {
    width: 48px;
    height: 48px;
    border-radius: 50%;
    background: #d0d0d0;
    color: #444;
    font-size: 18px;
    line-height: 48px;
    text-align: center;
}

.mail-from {
    flex: 1;
    color: #666;
    font-size: 14px;
    line-height: 22px;
}

.mail-from h1 {
    color: #333;
    font-size: 14px;
    line-height: 28px;
}

.mail-meta {
    display: flex;
    flex-direction: column;
    align-items: flex-end;
    gap: 16px;
    color: #444;
}

.mail-meta div {
    display: flex;
    align-items: center;
    gap: 6px;
    padding-top: 3px;
}

.mail-meta time {
    margin-left: 8px;
    padding-left: 18px;
    border-left: 1px solid #ddd;
}

.attachments {
    height: 54px;
    margin: 0 8px 0 6px;
    padding: 3px 0 9px;
    border-bottom: 1px solid #d5d5d5;
}

.attachment {
    display: flex;
    align-items: center;
    gap: 10px;
    width: 340px;
    height: 42px;
    padding-left: 4px;
    border: 1px solid #ababab;
    background: #e1e1e1;
    color: #333;
}

.mail-body {
    flex: 1;
    display: flex;
    justify-content: space-between;
    padding: 11px 8px 10px 17px;
    color: #1f3864;
    font-size: 13px;
    line-height: 19px;
}

.mail-body article {
    padding-top: 14px;
}

.mail-body article > p {
    margin-bottom: 19px;
}

.regards {
    font-style: italic;
}

.signature {
    display: flex;
    gap: 25px;
    margin: 38px 0 0 4px;
}

.signature b {
    font-size: 12px;
}

.logo {
    width: 77px;
    height: 76px;
}

.signature a {
    color: #0563c1;
}

.mail-scroll {
    display: flex;
    flex-direction: column;
    gap: 7px;
    width: 15px;
}

.mail-scroll div {
    flex: 1;
    border: 1px solid #777;
}

.mail-scroll i {
    display: grid;
    place-items: center;
    height: 15px;
    border: 1px solid #777;
}

.arrow-up::before, .arrow-down::before {
    content: "";
    border: 4px solid transparent;
    border-top-width: 0;
    border-bottom-color: #111;
}

.arrow-down::before {
    border-width: 4px 4px 0;
    border-top-color: #111;
}

/* File Explorer */
.explorer {
    position: absolute;
    top: 36px;
    left: 312px;
    right: 182px;
    padding: 0 1px;
    background: #fff;
    white-space: nowrap;
}

.ex-title {
    display: flex;
    height: 31px;
}

.ex-qat {
    display: flex;
    align-items: center;
    gap: 4px;
    width: 229px;
    padding-left: 8px;
}

.ex-qat i {
    width: 1px;
    height: 12px;
    margin: 0 5px 0 2px;
    background: #888;
}

.manage {
    width: 119px;
    margin-top: 4px;
    padding-top: 6px;
    background: #e8c9fb;
    color: #3b2450;
    text-align: center;
}

.ex-caption {
    flex: 1;
    padding: 8px 0 0 13px;
    color: #000;
}

.ex-tabs {
    display: flex;
    align-items: center;
    height: 24px;
    padding-right: 3px;
    border-bottom: 1px solid #dadbdc;
}

.ex-tabs button {
    width: 57px;
    height: 24px;
}

.ex-tabs .file {
    width: 56px;
    background: #0063b1;
    color: #fff;
}

.ex-tabs .active {
    width: 59px;
    border: 1px solid #dadbdc;
    border-bottom: none;
    background: #f5f6f7;
}

.ex-tabs .app-tools {
    width: 119px;
    border: solid #e8d6f4;
    border-width: 0 1px;
}

.hint {
    margin: 0 6px 0 auto;
    color: #999;
}

.ex-ribbon {
    display: flex;
    height: 92px;
    padding: 4px 0 1px;
    border-bottom: 1px solid #dadbdc;
    background: #f5f6f7;
}

.ex-group {
    display: flex;
    flex-direction: column;
    justify-content: space-between;
    border-right: 1px solid #e0e1e3;
    text-align: center;
}

.ex-group > span {
    color: #444;
}

.tools {
    display: flex;
    height: 66px;
}

.big {
    display: flex;
    flex-direction: column;
    align-items: center;
    width: 42px;
    padding-top: 3px;
    line-height: 13px;
}

.big svg {
    margin-bottom: 3px;
}

.big.wide {
    width: 70px;
}

.off {
    color: #777;
}

.stack {
    display: flex;
    flex-direction: column;
}

.stack button {
    display: flex;
    align-items: center;
    gap: 3px;
    height: 22px;
}

.stack.loose {
    gap: 7px;
    padding: 8px 4px 8px 9px;
}

.stack.ruled {
    padding-left: 7px;
    border-left: 1px solid #e0e1e3;
}

.caret {
    margin: 1px 0 0 1px;
    border: 3px solid transparent;
    border-top-color: #111;
    border-bottom: none;
}

.clipboard {
    width: 263px;
}

.clipboard .tools {
    padding-left: 3px;
}

.clipboard .big + .stack {
    margin-left: 4px;
}

.organize {
    width: 165px;
}

.new {
    width: 83px;
}

.new .tools {
    padding-left: 3px;
}

.new .stack {
    margin-left: 2px;
}

.open {
    width: 133px;
}

.open .big {
    width: 64px;
}

.open .big .caret {
    margin: 5px 0 0;
}

.select {
    width: 115px;
}

.select .tools {
    padding-left: 7px;
}

.ex-nav {
    display: flex;
    align-items: center;
    gap: 10px;
    height: 35px;
    padding: 0 12px 2px 11px;
    color: #666;
}

.disabled {
    color: #ccc;
}

.address {
    flex: 1;
    display: flex;
    align-items: center;
    gap: 4px;
    height: 22px;
    margin: 0 2px 0 -5px;
    padding-left: 2px;
    border: 1px solid #d9d9d9;
    color: #111;
}

.address svg {
    color: #666;
}

.push {
    margin-left: auto;
}

.address .refresh {
    width: 17px;
    height: 20px;
    margin-left: -4px;
    border-left: 1px solid #d9d9d9;
}

.ex-search {
    display: flex;
    align-items: center;
    width: 202px;
    height: 22px;
    padding: 0 6px 0 9px;
    border: 1px solid #d9d9d9;
}

.ex-search input::placeholder {
    color: #666;
}

.ex-main {
    display: flex;
    height: 386px;
}

.tree {
    width: 140px;
    color: #000;
}

.tree li {
    display: flex;
    align-items: center;
    gap: 5px;
    height: 24px;
    padding-left: 32px;
}

.tree .sub {
    padding-left: 40px;
}

.tree .picked {
    background: #d9d9d9;
}

.vscroll {
    display: flex;
    flex-direction: column;
    align-items: center;
    justify-content: space-between;
    width: 15px;
    padding: 3px 0;
    background: #f0f0f0;
    color: #444;
}

.vscroll div {
    width: 15px;
    height: 119px;
    margin-top: 77px;
    background: #cdcdcd;
}

.files {
    flex: 1;
    display: flex;
    flex-direction: column;
    justify-content: space-between;
    padding-left: 5px;
}

.files table {
    width: 601px;
    margin-left: 14px;
    border-spacing: 0;
    table-layout: fixed;
}

.files th {
    position: relative;
    height: 26px;
    padding: 0 0 0 6px;
    border-right: 1px solid #e5e5e5;
    color: #44546f;
    font-weight: normal;
    text-align: left;
}

.files th:first-child {
    padding-left: 3px;
}

.sort {
    position: absolute;
    top: -4px;
    left: 121px;
}

.col-name {
    width: 258px;
}

.col-date {
    width: 144px;
}

.col-type {
    width: 120px;
}

.files tbody::before {
    content: "";
    display: block;
    height: 5px;
}

.files td {
    height: 21px;
    padding: 0 0 0 6px;
    color: #555;
}

.files td:first-child {
    padding-left: 4px;
    color: #000;
}

.files td:last-child {
    padding-right: 7px;
    text-align: right;
}

.files td svg {
    margin-right: 4px;
    vertical-align: middle;
}

.selected {
    background: #cce8ff;
    outline: 1px solid #99d1ff;
    outline-offset: -1px;
}

.hscroll {
    display: flex;
    align-items: center;
    gap: 3px;
    height: 15px;
    margin-right: 1px;
    padding: 0 2px;
    background: #f0f0f0;
    color: #444;
}

.hscroll div {
    flex: 1;
    height: 15px;
    background: #cdcdcd;
}

.ex-status {
    display: flex;
    align-items: center;
    gap: 21px;
    height: 25px;
    padding: 0 4px 0 14px;
    color: #1e395b;
}

.ex-status button {
    display: grid;
    place-items: center;
    width: 22px;
    height: 22px;
}

.ex-status button + button {
    margin-left: -21px;
}

.ex-status .view-on {
    margin-left: auto;
    border: 1px solid #26a0da;
    background: #cbe8f6;
}

/* Context Menu */
.menu {
    position: absolute;
    top: 261px;
    left: 585px;
    width: 448px;
    padding: 1px 1px 4px;
    border: 1px solid #a0a0a0;
    background: #eee;
    color: #000;
    white-space: nowrap;
}

.menu li {
    display: flex;
    align-items: center;
    height: 22px;
    padding: 0 6px 0 33px;
}

.menu li > svg {
    margin: 0 8px 0 -24px;
}

.menu .parent {
    justify-content: space-between;
}

.menu .parent > svg {
    margin: 0;
}

.menu .hover {
    height: 25px;
    padding-top: 3px;
    background: #fff;
}

.menu .sep {
    height: 1px;
    margin: 3px 9px;
    padding: 0;
    background: #919191;
}

/* Watermark */
.watermark {
    position: absolute;
    right: 48px;
    bottom: 48px;
    display: flex;
    align-items: center;
    color: #fff;
    font-family: "Roboto", sans-serif;
    font-size: 33px;
    line-height: 64px;
    text-shadow: 0 0 2px #999, 0 0 4px #bbb;
    pointer-events: none;
}

.watermark svg {
    width: 60px;
    height: 64px;
    margin: 0 2px;
}

/* Taskbar */
.taskbar {
    display: flex;
    height: 40px;
    background: linear-gradient(to right, #00141c, #00061a);
    color: #fff;
}

.start, .task {
    display: grid;
    place-items: center;
    width: 48px;
}

.task {
    width: 49px;
    border-bottom: 2px solid transparent;
}

.current {
    border-color: #76b9ed;
    background: #334650;
}

.running {
    background: linear-gradient(#76b9ed, #76b9ed) center bottom / 40px 2px no-repeat border-box;
}

.task-search {
    display: flex;
    align-items: center;
    gap: 10px;
    width: 288px;
    padding-left: 12px;
    border: 1px solid #b5b5b5;
    background: #f2f2f2;
    color: #222;
    font-size: 14px;
}

.task-search input::placeholder {
    color: #333;
}

.earth {
    width: 72px;
    height: 38px;
}

.tray {
    display: flex;
    align-items: center;
    gap: 8px;
    margin-left: auto;
    margin-right: 4px;
    padding-right: 20px;
    border-right: 1px solid #555e68;
}

.tray time {
    margin: 0 10px 0 2px;
    line-height: 18px;
    text-align: center;
}
```
